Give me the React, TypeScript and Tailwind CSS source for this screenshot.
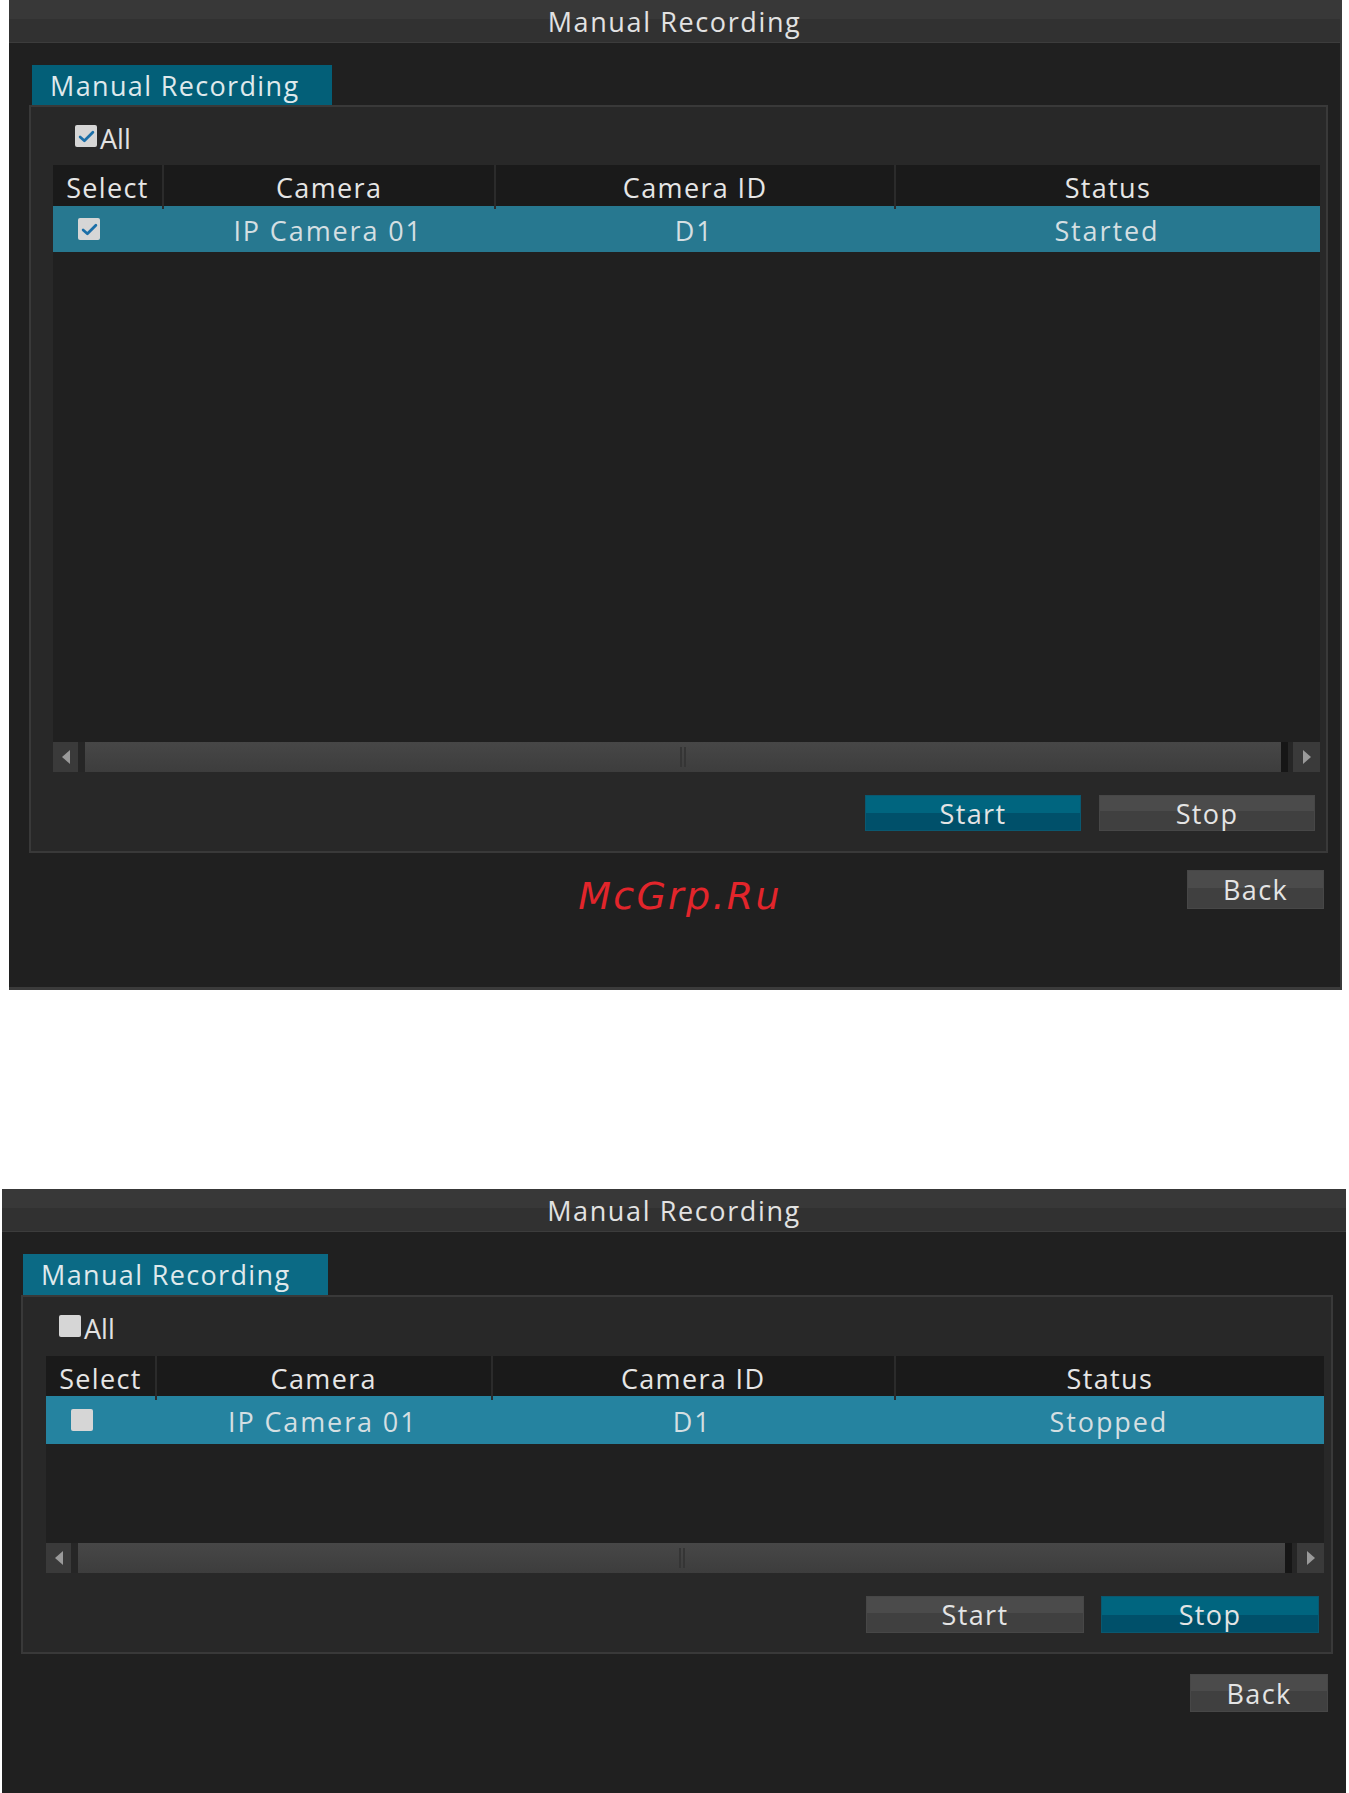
import React from "react";

type Cfg = {
  started: boolean;
  outer: string;
  tab: string;
  panel: string;
  allRow: string;
  table: string;
  headH: string;
  row: string;
  bodyH: string;
  btnRow: string;
  btnW: string;
  btnGap: string;
  btnH: string;
  back: string;
  backRow: string;
};

const windows: Cfg[] = [
  {
    started: true,
    outer: "ml-[9px] w-[1333px] h-[990px] border-r-2 border-b-[3px]",
    tab: "ml-[23px] w-[300px] h-[40px] bg-[#035f78]",
    panel: "ml-[20px] w-[1299px] h-[748px]",
    allRow: "h-[58px] pl-[44px] pt-[18px]",
    table: "ml-[22px] mr-[6px]",
    headH: "h-[41px]",
    row: "h-[46px] bg-[#277890]",
    bodyH: "h-[490px]",
    btnRow: "mt-[23px] pr-[11px]",
    btnW: "w-[216px]",
    btnGap: "gap-[18px]",
    btnH: "h-[36px]",
    back: "w-[137px] h-[39px]",
    backRow: "mt-[17px] pr-[16px]",
  },
  {
    started: false,
    outer: "ml-[2px] w-[1344px] h-[604px] mt-[199px]",
    tab: "ml-[21px] w-[305px] h-[41px] bg-[#0b6a85]",
    panel: "ml-[19px] w-[1312px] h-[359px]",
    allRow: "h-[59px] pl-[36px] pt-[18px]",
    table: "ml-[23px] mr-[7px]",
    headH: "h-[40px]",
    row: "h-[48px] bg-[#2583a0]",
    bodyH: "h-[99px]",
    btnRow: "mt-[23px] pr-[12px]",
    btnW: "w-[218px]",
    btnGap: "gap-[17px]",
    btnH: "h-[37px]",
    back: "w-[138px] h-[38px]",
    backRow: "mt-[20px] pr-[18px]",
  },
];

const Check = ({ on }: { on: boolean }) => (
  <span className="inline-flex h-[22px] w-[22px] shrink-0 items-center justify-center rounded-[2px] bg-[#d6d6d6]">
    {on && (
      <svg width="17" height="15" viewBox="0 0 16 14">
        <path d="M2 7.5 L6 11 L14 3" fill="none" stroke="#1b6fa8" strokeWidth="2.6" strokeLinecap="round" strokeLinejoin="round" />
      </svg>
    )}
  </span>
);

const Btn = ({ label, active, cls }: { label: string; active: boolean; cls: string }) => (
  <div
    className={`${cls} flex items-center justify-center pt-[2px] text-[27px] tracking-[0.05em] text-[#e4e4e4] ${
      active
        ? "bg-[linear-gradient(#00657f_50%,#00506a_50%)] border border-[#0a5870]"
        : "bg-[linear-gradient(#4b4b4b_45%,#404040_45%)] border border-[#474747]"
    }`}
  >
    {label}
  </div>
);

const ScrollBar = () => (
  <div className="flex h-[30px] items-stretch bg-[#262626]">
    <div className="flex w-[25px] items-center justify-center bg-[#3a3a3a]">
      <svg width="8" height="14" viewBox="0 0 8 14">
        <path d="M8 0 L0 7 L8 14 Z" fill="#9a9a9a" />
      </svg>
    </div>
    <div className="ml-[7px] flex flex-1 items-center justify-center bg-linear-to-b from-[#474747] to-[#3d3d3d]">
      <div className="flex gap-[2px]">
        <span className="h-[20px] w-[2px] bg-[#353535]" />
        <span className="h-[20px] w-[2px] bg-[#353535]" />
      </div>
    </div>
    <div className="w-[7px] bg-[#161616]" />
    <div className="ml-[5px] flex w-[27px] items-center justify-center bg-[#3a3a3a]">
      <svg width="8" height="14" viewBox="0 0 8 14">
        <path d="M0 0 L8 7 L0 14 Z" fill="#9a9a9a" />
      </svg>
    </div>
  </div>
);

const RecordingWindow = ({ cfg, mark }: { cfg: Cfg; mark?: boolean }) => (
  <div className={`${cfg.outer} relative flex flex-col border-[#3b3b3b] bg-[#202020]`}>
    <div className="flex h-[43px] shrink-0 items-center justify-center border-b border-[#3c3c3c] bg-[linear-gradient(#383838_45%,#313131_45%)] pt-[3px] text-[27px] tracking-[0.06em] text-[#e2e2e2]">
      Manual Recording
    </div>

    <div className="pt-[22px]">
      <div className={`${cfg.tab} flex items-center pl-[18px] pt-[2px] text-[27px] tracking-[0.05em] text-[#dfe9ec]`}>
        Manual Recording
      </div>

      <div className={`${cfg.panel} flex flex-col border-2 border-[#393939] bg-[#282828]`}>
        <div className={`${cfg.allRow} flex items-start gap-[3px]`}>
          <Check on={cfg.started} />
          <span className="-mt-[6px] text-[27px] text-[#e2e2e2]">All</span>
        </div>

        <div className={cfg.table}>
          <div className={`${cfg.headH} grid grid-cols-[109px_287fr_345fr_368fr] bg-[#1a1a1a] text-[27px] tracking-[0.05em] text-[#e6e6e6]`}>
            <div className="flex items-center justify-center pt-[3px]">Select</div>
            <div className="flex items-center justify-center border-l-2 border-[#2b2b2b] pt-[3px]">Camera</div>
            <div className="flex items-center justify-center border-l-2 border-[#2b2b2b] pt-[3px]">Camera ID</div>
            <div className="flex items-center justify-center border-l-2 border-[#2b2b2b] pt-[3px]">Status</div>
          </div>
          <div className={`${cfg.row} grid grid-cols-[109px_287fr_345fr_368fr] text-[27px] tracking-[0.07em] text-[#d4dfe2]`}>
            <div className="flex items-center pl-[25px]">
              <Check on={cfg.started} />
            </div>
            <div className="flex items-center justify-center pt-[4px]">IP Camera 01</div>
            <div className="flex items-center justify-center pt-[4px]">D1</div>
            <div className="flex items-center justify-center pt-[4px]">{cfg.started ? "Started" : "Stopped"}</div>
          </div>
          <div className={`${cfg.bodyH} bg-[#202020]`} />
          <ScrollBar />
        </div>

        <div className={`${cfg.btnRow} flex justify-end ${cfg.btnGap}`}>
          <Btn label="Start" active={cfg.started} cls={`${cfg.btnW} ${cfg.btnH}`} />
          <Btn label="Stop" active={!cfg.started} cls={`${cfg.btnW} ${cfg.btnH}`} />
        </div>
      </div>

      <div className={`${cfg.backRow} flex justify-end`}>
        <Btn label="Back" active={false} cls={cfg.back} />
      </div>
    </div>

    {mark && (
      <div className="absolute left-[671px] top-[874px] -translate-x-1/2 text-[38px] italic leading-[44px] tracking-[0.06em] text-[#e2252b] font-['DejaVu_Sans',sans-serif] font-light">
        McGrp.Ru
      </div>
    )}
  </div>
);

export default function App() {
  return (
    <div className="min-h-[1793px] overflow-hidden bg-white font-['Open_Sans',sans-serif]">
      <RecordingWindow cfg={windows[0]} mark />
      <RecordingWindow cfg={windows[1]} />
    </div>
  );
}
